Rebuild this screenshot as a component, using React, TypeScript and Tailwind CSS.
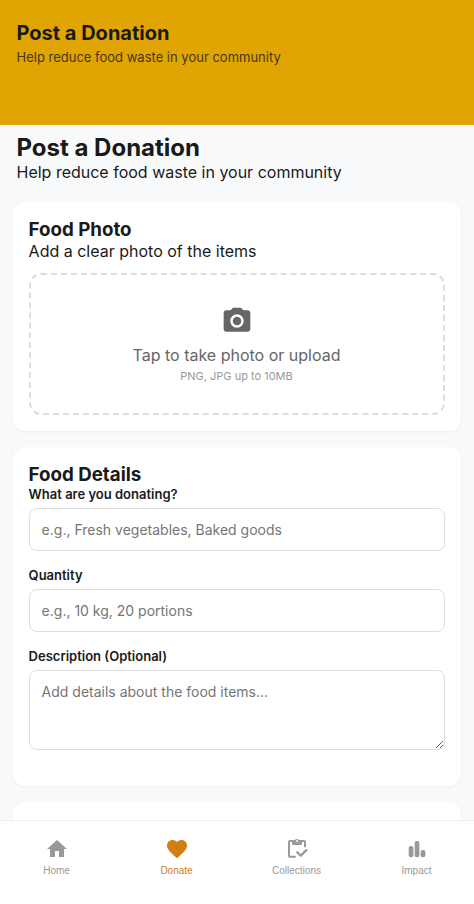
import type { ReactNode } from 'react';
import { MdCameraAlt, MdFavorite, MdHome } from 'react-icons/md';

function ClipboardCheckIcon() {
  return (
    <svg width="24" height="24" viewBox="0 0 24 24" fill="none" stroke="currentColor" strokeWidth="2">
      <path d="M10.8 19.7H5Q4 19.7 4 18.7V5Q4 4 5 4H19Q20 4 20 5V10.3" />
      <path d="M7 4h2.2a3 3 0 0 1 5.6 0H17v2.500Q17 8 15.5 8h-7Q7 8 7 6.500z" fill="currentColor" stroke="none" />
      <circle cx="12" cy="4" r="0.9" fill="white" stroke="none" />
      <path d="M12.300 15.200l3.500 3.400 5.500-5.500" strokeWidth="2.300" strokeLinecap="round" strokeLinejoin="round" />
    </svg>
  );
}

function BarsIcon() {
  return (
    <svg width="24" height="24" viewBox="0 0 24 24" fill="currentColor">
      <rect x="3.7" y="9" width="4.700" height="11.3" rx="2" />
      <rect x="9.7" y="4" width="4.700" height="16.3" rx="2" />
      <rect x="15.700" y="13" width="4.700" height="7.3" rx="2" />
    </svg>
  );
}

const fieldClass =
  'block w-full rounded-lg border border-[#dddddd] bg-white px-3 text-[14px] text-[#1a1a1a] placeholder:text-[#757575]';

function Card({ title, children }: { title?: string; children?: ReactNode }) {
  return (
    <section className="mb-4 rounded-xl bg-white p-4 shadow-[0_1px_3px_rgba(0,0,0,0.05)]">
      {title && <h2 className="text-[18.72px] leading-[23px] font-bold">{title}</h2>}
      {children}
    </section>
  );
}

function Label({ children }: { children: ReactNode }) {
  return <span className="mb-1.5 block text-[13px] leading-4 font-semibold">{children}</span>;
}

const navItems = [
  { label: 'Home', icon: <MdHome size={24} /> },
  { label: 'Donate', icon: <MdFavorite size={24} />, active: true },
  { label: 'Collections', icon: <ClipboardCheckIcon /> },
  { label: 'Impact', icon: <BarsIcon /> },
];

export default function App() {
  return (
    <div className="flex h-screen flex-col overflow-hidden bg-[#f8f9fb] font-['Inter',sans-serif] text-[#1a1a1a]">
      <header className="h-[125px] shrink-0 bg-[#e0a503] px-[16.5px] pt-5">
        <div className="text-[20px] leading-[26px] font-bold">Post a Donation</div>
        <p className="mt-[3px] text-[13px] leading-4 opacity-80">Help reduce food waste in your community</p>
      </header>

      <main className="min-h-0 flex-1 overflow-hidden px-[12.6px]">
        <div className="mb-5 px-[3.9px] pt-2">
          <h1 className="text-[24px] leading-[29px] font-bold">Post a Donation</h1>
          <p className="text-[16px] leading-5">Help reduce food waste in your community</p>
        </div>

        <Card title="Food Photo">
          <p className="text-[16px] leading-5">Add a clear photo of the items</p>
          <div className="mt-3 flex h-[142px] flex-col items-center rounded-xl border-2 border-dashed border-[#dddddd] pt-[30px] pr-px text-[#666666]">
            <MdCameraAlt size={32} />
            <span className="mt-2 text-[16px] leading-5">Tap to take photo or upload</span>
            <span className="mt-1 text-[11px] leading-[14px] text-[#999999]">PNG, JPG up to 10MB</span>
          </div>
        </Card>

        <Card title="Food Details">
          <label className="mb-4 block">
            <Label>What are you donating?</Label>
            <input className={`${fieldClass} h-[43px]`} placeholder="e.g., Fresh vegetables, Baked goods" />
          </label>
          <label className="mb-4 block">
            <Label>Quantity</Label>
            <input className={`${fieldClass} h-[43px]`} placeholder="e.g., 10 kg, 20 portions" />
          </label>
          <label className="mb-5 block">
            <Label>Description (Optional)</Label>
            <textarea
              className={`${fieldClass} h-20 resize-y py-3 leading-[17px]`}
              placeholder="Add details about the food items..."
            />
          </label>
        </Card>

        <Card />
      </main>

      <nav className="flex h-[84px] shrink-0 justify-between border-t border-[#eeeeee] bg-white pt-4 pr-[27.5px] pl-[26.5px] font-['Liberation_Sans',Arial,sans-serif]">
        {navItems.map((item) => (
          <div
            key={item.label}
            className={`flex w-[60px] flex-col items-center ${item.active ? 'text-[#d17e15]' : 'text-[#999999]'}`}
          >
            <span className="flex h-6 items-center">{item.icon}</span>
            <span className="mt-1 text-[10px] leading-3">{item.label}</span>
          </div>
        ))}
      </nav>
    </div>
  );
}
